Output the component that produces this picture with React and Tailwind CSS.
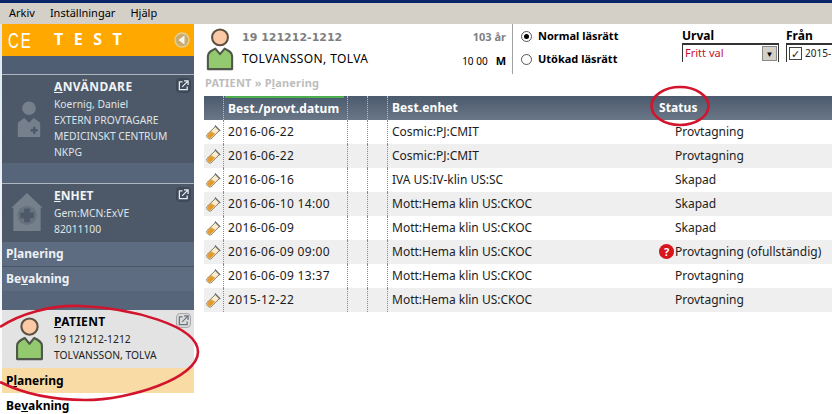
import React from 'react';

const font = "font-['Noto_Sans','Liberation_Sans',sans-serif]";

const rows = [
  { date: '2016-06-22', unit: 'Cosmic:PJ:CMIT', status: 'Provtagning' },
  { date: '2016-06-22', unit: 'Cosmic:PJ:CMIT', status: 'Provtagning' },
  { date: '2016-06-16', unit: 'IVA US:IV-klin US:SC', status: 'Skapad' },
  { date: '2016-06-10 14:00', unit: 'Mott:Hema klin US:CKOC', status: 'Skapad' },
  { date: '2016-06-09', unit: 'Mott:Hema klin US:CKOC', status: 'Skapad' },
  { date: '2016-06-09 09:00', unit: 'Mott:Hema klin US:CKOC', status: 'Provtagning (ofullständig)', warn: true },
  { date: '2016-06-09 13:37', unit: 'Mott:Hema klin US:CKOC', status: 'Provtagning' },
  { date: '2015-12-22', unit: 'Mott:Hema klin US:CKOC', status: 'Provtagning' },
];

function PersonIcon({ className }) {
  return (
    <svg viewBox="0 0 30 46" className={className}>
      <path d="M2 30 C2 26 6 24 10 22 L15 28 L20 22 C24 24 28 26 28 30 V44 H2 Z" fill="#93c96f" stroke="#4f564a" strokeWidth="2.2" strokeLinejoin="round" />
      <circle cx="15" cy="10" r="8.5" fill="#fbc9a5" stroke="#5c5040" strokeWidth="2.2" />
    </svg>
  );
}

function UserIcon() {
  return (
    <svg viewBox="0 0 30 46" className="h-[41px] w-[24px]">
      <circle cx="15" cy="9" r="8.5" fill="#75808c" />
      <path d="M1 27 L9 21 L15 27 L21 21 L29 27 V45 H1 Z" fill="#75808c" />
      <path d="M17 35 h3 v-3 h3 v3 h3 v3 h-3 v3 h-3 v-3 h-3 Z" fill="#4d5968" />
    </svg>
  );
}

function HouseIcon() {
  return (
    <svg viewBox="0 0 32 40" className="h-[39px] w-[32px]">
      <path d="M0 15 L16 0 L32 15 H30 V39 H2 V15 Z" fill="#75808c" />
      <circle cx="16" cy="23" r="10" fill="#68727e" />
      <path d="M13 16 h6 v4 h4 v6 h-4 v4 h-6 v-4 h-4 v-6 h4 Z" fill="#4d5968" />
    </svg>
  );
}

function ExternalIcon({ light }) {
  return (
    <div className={`flex h-[15px] w-[15px] items-center justify-center rounded-sm border ${light ? 'border-[#a8a8a8] bg-[#dcdcdc]' : 'border-[#3d4857] bg-[#3f4b5b]'}`}>
      <svg viewBox="0 0 12 12" className="h-[11px] w-[11px]" fill="none" stroke={light ? '#6b7580' : '#e8edf2'} strokeWidth="1.4">
        <path d="M5 2 H1.5 V10.5 H10 V7" />
        <path d="M4.5 7.5 L10.5 1.5 M6.5 1 H11 V5.5" />
      </svg>
    </div>
  );
}

function TubeIcon() {
  return (
    <svg viewBox="0 0 17 16" className="h-[16px] w-[17px] shrink-0">
      <path d="M10.5 2.5 L14.5 6.5 L6 14.8 C4.2 16 0.8 13 1.8 10.8 Z" fill="#f9ecd0" stroke="#8c7a5c" strokeWidth="1" />
      <path d="M6 7.2 L10 9.8 L5.8 14 C4.2 15 1.8 13 2.6 11 Z" fill="#e59a2e" />
      <path d="M9.8 1.6 L15.2 7" stroke="#6e6e6e" strokeWidth="1.4" />
    </svg>
  );
}

function SideLink({ label, ul, rest, className }) {
  return (
    <div className={`flex items-center px-[4px] text-[12px] font-bold ${className}`}>
      {label}<span className="underline">{ul}</span>{rest}
    </div>
  );
}

export default function App() {
  return (
    <div className={`relative h-[414px] w-[832px] overflow-hidden bg-white text-[11px] text-[#1c1c1c] ${font}`}>
      {/* titelrad och meny */}
      <div className="h-[3px] bg-[#0a246a]" />
      <div className="flex h-[21px] items-center gap-[15px] bg-[#d4d0c8] pl-[9px] text-[11px] text-black">
        <span>Arkiv</span>
        <span>Inställningar</span>
        <span>Hjälp</span>
      </div>

      <div className="flex h-[390px] items-start">
        <div className="h-[390px] w-[2px] shrink-0 bg-gradient-to-b from-[#dfe8f2] to-white" />
        {/* vänsterkolumn */}
        <div className="flex h-[394px] w-[192px] shrink-0 flex-col">
          <div className="flex h-[32px] items-center justify-between bg-[#ffa800] pl-[6px] pr-[4px] text-white">
            <span className="w-[46px] origin-left scale-x-[0.68] font-['Liberation_Sans',sans-serif] text-[22px] tracking-[3px]">CE</span>
            <span className="flex-1 pb-[2px] text-[16px] font-bold tracking-[10.5px]">TEST</span>
            <svg viewBox="0 0 16 16" className="h-[16px] w-[16px]">
              <circle cx="8" cy="8" r="7" fill="#c8ad72" stroke="#e6cf92" strokeWidth="1.4" />
              <path d="M4.5 8 L10.5 3.5 V12.5 Z" fill="#fbf6e8" />
            </svg>
          </div>

          <div className="h-[19px] border-b border-[#aeb6c0] bg-[#4f5e72]" />
          <div className="flex h-[88px] bg-[#4d5968] pt-[3px] text-[10.3px] text-[#dfe4e9]">
            <div className="flex w-[52px] justify-center pl-[2px] pt-[21px]"><UserIcon /></div>
            <div className="flex-1 leading-[16px]">
              <div className="text-[12px] font-bold leading-[18px] tracking-[0.4px] text-[#f0f3f6]"><span className="underline">A</span>NVÄNDARE</div>
              <div>Koernig, Daniel</div>
              <div className="whitespace-nowrap">EXTERN PROVTAGARE</div>
              <div className="whitespace-nowrap">MEDICINSKT CENTRUM</div>
              <div>NKPG</div>
            </div>
            <div className="pr-[3px]"><ExternalIcon /></div>
          </div>

          <div className="h-[21px] border-b border-[#aeb6c0] bg-[#566579]" />
          <div className="flex h-[58px] bg-[#4d5968] pt-[3px] text-[10.3px] text-[#dfe4e9]">
            <div className="flex w-[52px] justify-center pr-[2px] pt-[6px]"><HouseIcon /></div>
            <div className="flex-1 leading-[16px]">
              <div className="text-[12px] font-bold leading-[18px] text-[#f0f3f6]"><span className="underline">E</span>NHET</div>
              <div>Gem:MCN:ExVE</div>
              <div>82011100</div>
            </div>
            <div className="pr-[3px]"><ExternalIcon /></div>
          </div>
          <SideLink label="P" ul="l" rest="anering" className="h-[25px] border-b border-[#4a5666] bg-[#5d6c80] text-[#eef1f4]" />
          <SideLink label="Be" ul="v" rest="akning" className="h-[24px] bg-[#5d6c80] text-[#eef1f4]" />
          <div className="h-[19px] bg-[#566579]" />

          <div className="flex h-[58px] bg-[#e3e3e3] pt-[3px] text-[10.3px] text-[#222]">
            <div className="flex w-[52px] justify-center pl-[2px] pt-[4px]"><PersonIcon className="h-[44px] w-[29px]" /></div>
            <div className="flex-1 leading-[16px]">
              <div className="text-[12px] font-bold leading-[18px] tracking-[0.3px] text-black"><span className="underline">P</span>ATIENT</div>
              <div>19 121212-1212</div>
              <div className="whitespace-nowrap">TOLVANSSON, TOLVA</div>
            </div>
            <div className="pr-[3px]"><ExternalIcon light /></div>
          </div>
          <SideLink label="P" ul="l" rest="anering" className="h-[25px] bg-[#f9dba5] text-black" />
          <SideLink label="Be" ul="v" rest="akning" className="h-[25px] bg-white text-black" />
        </div>

        {/* huvudyta */}
        <div className="min-w-0 flex-1 pl-[10px]">
          <div className="flex h-[50px]">
            <div className="flex w-[309px] border-r border-[#a0a0a0]">
              <PersonIcon className="ml-[2px] mt-[3px] h-[45px] w-[28px] shrink-0" />
              <div className="ml-[8px] flex-1 pt-[4px]">
                <div className="font-['DejaVu_Sans',sans-serif] text-[11px] font-bold leading-[20px] text-[#7f7f7f]">19 121212-1212</div>
                <div className="mt-[1px] text-[12px] leading-[20px] tracking-[0.4px] text-black">TOLVANSSON, TOLVA</div>
              </div>
              <div className="flex flex-col items-end pr-[6px] pt-[3px]">
                <div className="text-[11px] font-bold leading-[20px] text-[#7f7f7f]">103 år</div>
                <div className="mt-[4px] flex items-center gap-[8px] text-[10px] leading-[20px] text-black">
                  <span>10 00</span><span className="text-[11px] font-bold">M</span>
                </div>
              </div>
            </div>
            <div className="flex w-[169px] flex-col gap-[3px] pl-[8px] pt-[2px] text-[11px] font-bold text-black">
              <div className="flex h-[20px] items-center gap-[6px]">
                <span className="flex h-[11px] w-[11px] items-center justify-center rounded-full border border-[#555] bg-white"><span className="h-[5px] w-[5px] rounded-full bg-black" /></span>
                Normal läsrätt
              </div>
              <div className="flex h-[20px] items-center gap-[6px]">
                <span className="h-[11px] w-[11px] rounded-full border border-[#555] bg-white" />
                Utökad läsrätt
              </div>
            </div>
            <div className="w-[104px] pt-[5px]">
              <div className="text-[12px] font-bold leading-[14px] text-black">Urval</div>
              <div className="flex h-[19px] w-[97px] items-center justify-between border-t-2 border-l border-r border-[#333] bg-white pl-[2px] pr-[1px] text-[11px] text-[#c8102e]">
                Fritt val
                <span className="flex h-[15px] w-[15px] items-center justify-center border border-[#888] bg-[#d4d0c8] text-[8px] text-black">▼</span>
              </div>
            </div>
            <div className="flex-1 overflow-hidden pt-[5px]">
              <div className="text-[12px] font-bold leading-[14px] text-black">Från</div>
              <div className="flex h-[19px] items-center gap-[3px] whitespace-nowrap border-t-2 border-l border-[#333] bg-white pl-[2px] text-[10px]">
                <span className="flex h-[13px] w-[13px] shrink-0 items-center justify-center border border-[#444] text-[11px] leading-none">✓</span>
                2015-
              </div>
            </div>
          </div>

          <div className="flex h-[22px] items-center pb-[4px] pl-[1px] text-[11px] font-bold tracking-[0.2px] text-[#bdbdbd]">
            <span>PATIENT » P<span className="underline">l</span>anering</span>
          </div>

          <div className="w-[628px]">
            <div className="flex h-[24px] items-stretch bg-gradient-to-b from-[#4c5a6e] to-[#6a7787] text-[12px] font-bold tracking-[0.1px] text-white">
              <div className="w-[20px] border-r border-dotted border-[#b8c0c8]" />
              <div className="flex w-[124px] items-center border-r border-dotted border-[#b8c0c8] pl-[4px]">
                <div className="flex h-full w-[119px] -ml-[3px] items-center border-t-2 border-[#4caf50] pl-[3px]">Best./provt.datum</div>
              </div>
              <div className="w-[20px] border-r border-dotted border-[#b8c0c8]" />
              <div className="w-[20px] border-r border-dotted border-[#b8c0c8]" />
              <div className="flex w-[270px] items-center pl-[4px]">Best.enhet</div>
              <div className="flex flex-1 items-center pl-[1px]">Status</div>
            </div>
            {rows.map((row, i) => (
              <div key={i} className={`flex h-[24px] items-stretch text-[12px] text-[#1c1c1c] ${i % 2 === 1 ? 'bg-[#efefef]' : 'bg-white'}`}>
                <div className="flex w-[20px] items-center justify-center border-r border-dotted border-[#8a8a8a]"><TubeIcon /></div>
                <div className="flex w-[124px] items-center whitespace-nowrap border-r border-dotted border-[#8a8a8a] pl-[4px] tracking-[0.35px]">{row.date}</div>
                <div className="w-[20px] border-r border-dotted border-[#8a8a8a]" />
                <div className="w-[20px] border-r border-dotted border-[#8a8a8a]" />
                <div className="flex w-[270px] items-center whitespace-nowrap pl-[4px]">{row.unit}</div>
                <div className="relative flex flex-1 items-center whitespace-nowrap pl-[17px]">
                  {row.warn && (
                    <span className="absolute left-px top-[4px] flex h-[15px] w-[15px] items-center justify-center rounded-full bg-[#d8141c] text-[11px] font-bold leading-none text-white">?</span>
                  )}
                  {row.status}
                </div>
              </div>
            ))}
          </div>
        </div>
      </div>

      {/* röda markeringar ovanpå skärmbilden */}
      <svg className="pointer-events-none absolute left-0 top-0" width="832" height="414" fill="none" stroke="#d2142c" strokeWidth="2.6">
        <ellipse cx="680" cy="106" rx="28.5" ry="19" />
        <path d="M0 327 C20 314 50 305 80 306 C130 308 198 325 198 352 C198 378 130 400 85 400 C50 400 20 392 0 382" />
      </svg>
    </div>
  );
}
